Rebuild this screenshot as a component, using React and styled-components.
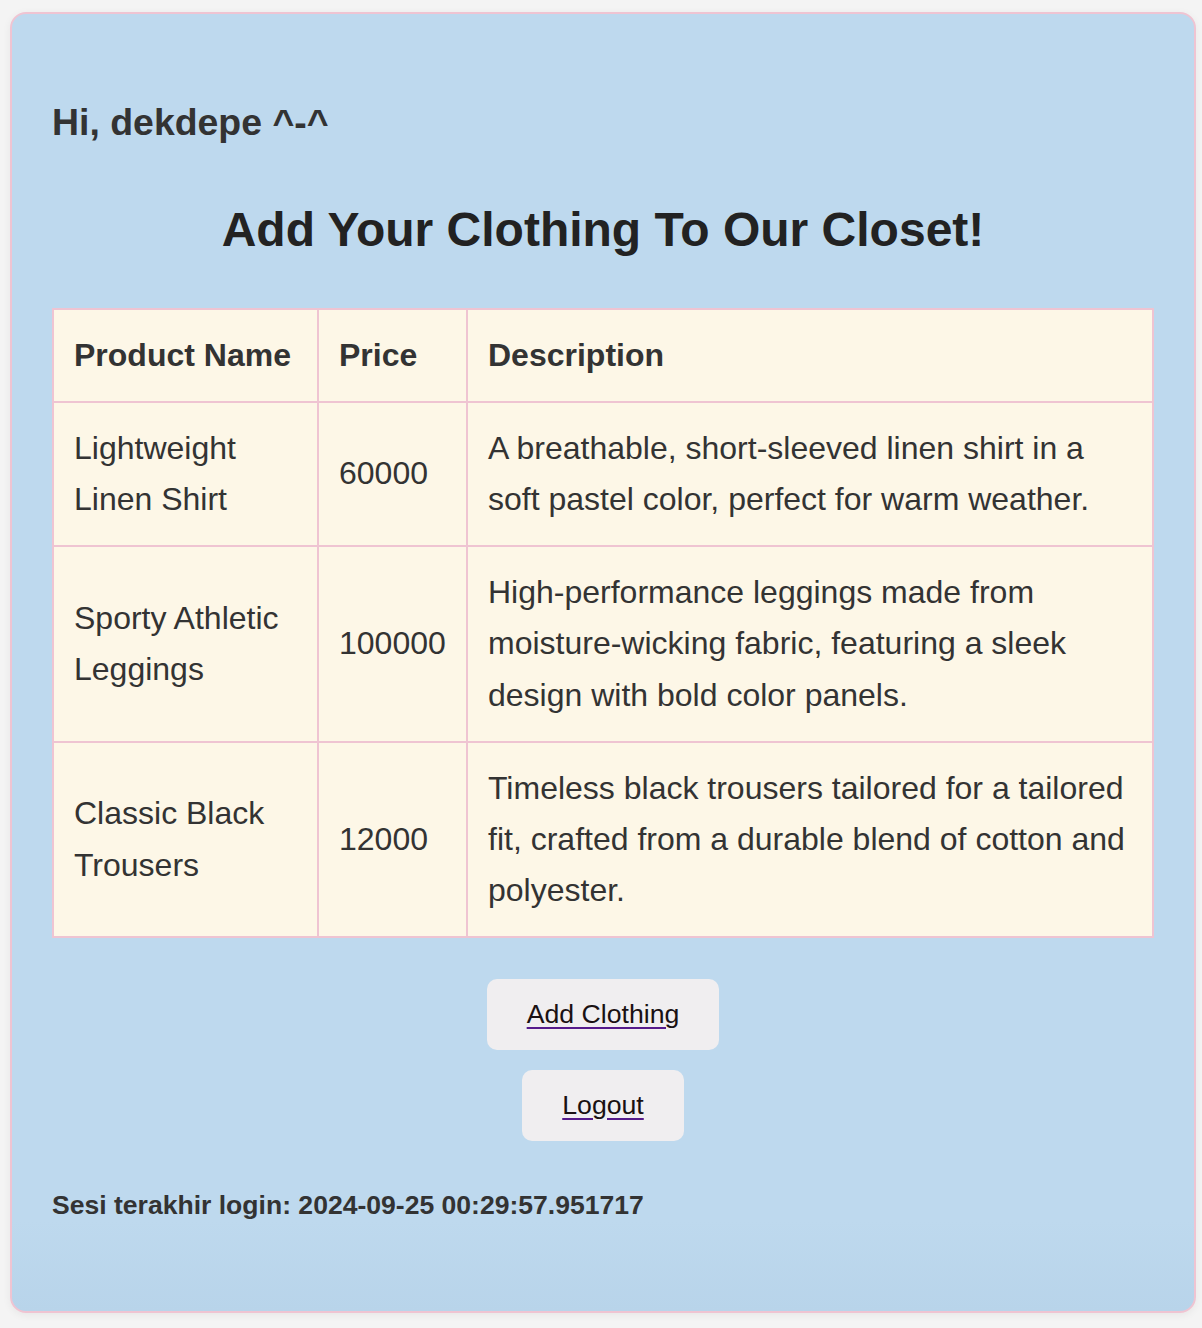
import React from "react";
import styled, { createGlobalStyle } from "styled-components";

const GlobalStyle = createGlobalStyle`
  html, body {
    margin: 0;
    padding: 0;
    background: #f4f4f4;
  }
  body {
    font-family: "Liberation Sans", Arial, Helvetica, sans-serif;
    font-size: 32px;
    line-height: 1.6;
    color: #333;
  }
`;

const Card = styled.main`
  margin: 12px 6px 15px 10px;
  padding: 40px;
  border: 2px solid #efc4d2;
  border-radius: 16px;
  background: linear-gradient(to bottom, #bed9ee 0%, #bed9ee 93%, #b8d4ea 100%);
  box-shadow: 0 2px 8px rgba(0, 0, 0, 0.06);
`;

const Greeting = styled.h3`
  font-size: 37.44px;
  font-weight: bold;
  color: #333;
  margin: 39px 0 37px;
`;

const Title = styled.h2`
  font-size: 48px;
  font-weight: bold;
  color: #222;
  text-align: center;
  margin: 39px 0 39px;
`;

const Table = styled.table`
  width: 100%;
  border-collapse: collapse;
  table-layout: fixed;
  border: 2px solid #efc4d2;
  background: #fdf7e7;
`;

const Cell = styled.td`
  padding: 20px;
  border: 2px solid #efc4d2;
  vertical-align: middle;
  text-align: left;
  color: #333;
  font-weight: ${(p) => (p.$head ? "bold" : "normal")};
`;

const Actions = styled.div`
  display: flex;
  flex-direction: column;
  align-items: center;
  gap: 20px;
  margin-top: 41px;
`;

const Button = styled.button`
  font-family: "Liberation Sans", Arial, Helvetica, sans-serif;
  font-size: 26.67px;
  line-height: 30.67px;
  padding: 20px 40px;
  border: none;
  border-radius: 10px;
  background: #f0eef0;
  cursor: pointer;
`;

const ButtonLink = styled.a`
  color: #1a1113;
  text-decoration: underline;
  text-decoration-color: #551a8b;
  text-decoration-thickness: 2px;
  text-underline-offset: 4px;
`;

const LastLogin = styled.h5`
  font-size: 26.56px;
  font-weight: bold;
  color: #333;
  margin: 43px 0 45px;
`;

const products = [
  {
    name: "Lightweight Linen Shirt",
    price: 60000,
    description:
      "A breathable, short-sleeved linen shirt in a soft pastel color, perfect for warm weather.",
  },
  {
    name: "Sporty Athletic Leggings",
    price: 100000,
    description:
      "High-performance leggings made from moisture-wicking fabric, featuring a sleek design with bold color panels.",
  },
  {
    name: "Classic Black Trousers",
    price: 12000,
    description:
      "Timeless black trousers tailored for a tailored fit, crafted from a durable blend of cotton and polyester.",
  },
];

export default function App() {
  return (
    <>
      <GlobalStyle />
      <Card>
        <Greeting>Hi, dekdepe ^-^</Greeting>
        <Title>Add Your Clothing To Our Closet!</Title>
        <Table>
          <colgroup>
            <col style={{ width: 265 }} />
            <col style={{ width: 149 }} />
            <col />
          </colgroup>
          <thead>
            <tr>
              <Cell as="th" $head>Product Name</Cell>
              <Cell as="th" $head>Price</Cell>
              <Cell as="th" $head>Description</Cell>
            </tr>
          </thead>
          <tbody>
            {products.map((p) => (
              <tr key={p.name}>
                <Cell>{p.name}</Cell>
                <Cell>{p.price}</Cell>
                <Cell>{p.description}</Cell>
              </tr>
            ))}
          </tbody>
        </Table>
        <Actions>
          <Button>
            <ButtonLink href="#add">Add Clothing</ButtonLink>
          </Button>
          <Button>
            <ButtonLink href="#logout">Logout</ButtonLink>
          </Button>
        </Actions>
        <LastLogin>Sesi terakhir login: 2024-09-25 00:29:57.951717</LastLogin>
      </Card>
    </>
  );
}
